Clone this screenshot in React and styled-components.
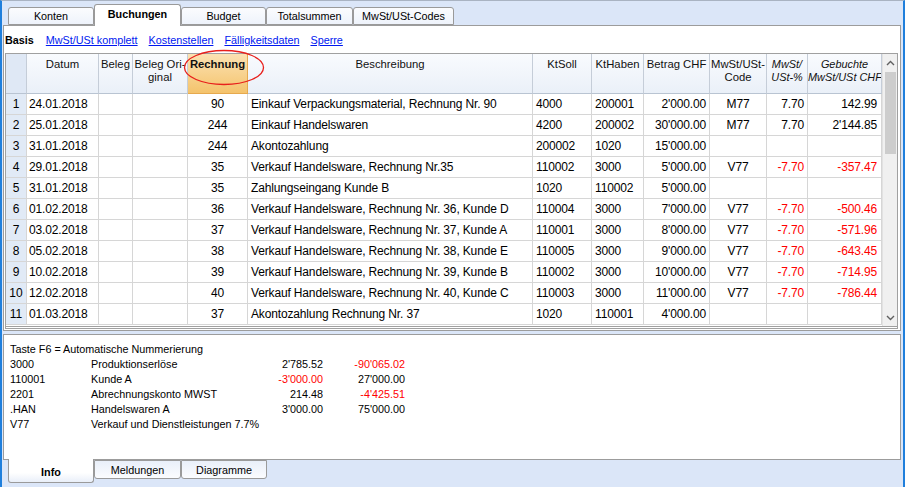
import React from 'react';
import styled, { createGlobalStyle } from 'styled-components';

const GlobalStyle = createGlobalStyle`
  html, body {
    margin: 0;
    padding: 0;
  }
  body {
    font-family: "Liberation Sans", Arial, sans-serif;
    background: #dbe6f8;
  }
`;

const topTabs = [
  { label: 'Konten', width: 86 },
  { label: 'Buchungen', width: 87, active: true },
  { label: 'Budget', width: 85 },
  { label: 'Totalsummen', width: 87 },
  { label: 'MwSt/USt-Codes', width: 101 },
];

const bottomTabs = [
  { label: 'Info', width: 86, active: true },
  { label: 'Meldungen', width: 87 },
  { label: 'Diagramme', width: 86 },
];

const views = ['MwSt/USt komplett', 'Kostenstellen', 'Fälligkeitsdaten', 'Sperre'];

// width includes the 1px grid line on the right
const columns = [
  { key: 'nr', width: 21, align: 'center', lines: [''] },
  { key: 'date', width: 72, align: 'left', pad: 2, lines: ['Datum'] },
  { key: 'doc', width: 34, align: 'left', lines: ['Beleg'] },
  { key: 'orig', width: 55, align: 'left', lines: ['Beleg Ori-', 'ginal'] },
  { key: 'inv', width: 60, align: 'center', lines: ['Rechnung'], highlight: true },
  { key: 'desc', width: 285, align: 'left', pad: 3, lines: ['Beschreibung'] },
  { key: 'debit', width: 59, align: 'left', pad: 3, lines: ['KtSoll'] },
  { key: 'credit', width: 52, align: 'left', pad: 3, lines: ['KtHaben'] },
  { key: 'amount', width: 66, align: 'right', pad: 3, lines: ['Betrag CHF'] },
  { key: 'code', width: 57, align: 'center', lines: ['MwSt/USt-', 'Code'] },
  { key: 'pct', width: 41, align: 'right', pad: 3, lines: ['MwSt/', 'USt-%'], italic: true },
  { key: 'vat', width: 74, align: 'right', pad: 4, lines: ['Gebuchte', 'MwSt/USt CHF'], italic: true },
];

const rows = [
  ['24.01.2018', '90', 'Einkauf Verpackungsmaterial, Rechnung Nr. 90', '4000', '200001', "2'000.00", 'M77', '7.70', '142.99'],
  ['25.01.2018', '244', 'Einkauf Handelswaren', '4200', '200002', "30'000.00", 'M77', '7.70', "2'144.85"],
  ['31.01.2018', '244', 'Akontozahlung', '200002', '1020', "15'000.00", '', '', ''],
  ['29.01.2018', '35', 'Verkauf Handelsware, Rechnung Nr.35', '110002', '3000', "5'000.00", 'V77', '-7.70', '-357.47'],
  ['31.01.2018', '35', 'Zahlungseingang Kunde B', '1020', '110002', "5'000.00", '', '', ''],
  ['01.02.2018', '36', 'Verkauf Handelsware, Rechnung Nr. 36, Kunde D', '110004', '3000', "7'000.00", 'V77', '-7.70', '-500.46'],
  ['03.02.2018', '37', 'Verkauf Handelsware, Rechnung Nr. 37, Kunde A', '110001', '3000', "8'000.00", 'V77', '-7.70', '-571.96'],
  ['05.02.2018', '38', 'Verkauf Handelsware, Rechnung Nr. 38, Kunde E', '110005', '3000', "9'000.00", 'V77', '-7.70', '-643.45'],
  ['10.02.2018', '39', 'Verkauf Handelsware, Rechnung Nr. 39, Kunde B', '110002', '3000', "10'000.00", 'V77', '-7.70', '-714.95'],
  ['12.02.2018', '40', 'Verkauf Handelsware, Rechnung Nr. 40, Kunde C', '110003', '3000', "11'000.00", 'V77', '-7.70', '-786.44'],
  ['01.03.2018', '37', 'Akontozahlung Rechnung Nr. 37', '1020', '110001', "4'000.00", '', '', ''],
];

const infoLines = [
  ['3000', 'Produktionserlöse', "2'785.52", "-90'065.02"],
  ['110001', 'Kunde A', "-3'000.00", "27'000.00"],
  ['2201', 'Abrechnungskonto MWST', '214.48', "-4'425.51"],
  ['.HAN', 'Handelswaren A', "3'000.00", "75'000.00"],
  ['V77', 'Verkauf und Dienstleistungen 7.7%'],
];

const gridTemplate = columns.map((c) => `${c.width}px`).join(' ');

export default function App() {
  return (
    <>
      <GlobalStyle />
      <Window>
        <TopTabBar>
          {topTabs.map((t) => (
            <TopTab key={t.label} $active={t.active} style={{ width: t.width }}>
              {t.label}
            </TopTab>
          ))}
        </TopTabBar>

        <MainPanel>
          <ViewBar>
            <ViewCurrent>Basis</ViewCurrent>
            {views.map((v) => (
              <ViewLink key={v}>{v}</ViewLink>
            ))}
          </ViewBar>

          <Table>
            <GridArea>
              <HeaderRow>
                {columns.map((c) => (
                  <HeaderCell
                    key={c.key}
                    $first={c.key === 'nr'}
                    $highlight={c.highlight}
                    $italic={c.italic}
                  >
                    {c.lines.map((l, i) => (
                      <HeaderLine key={i}>{l}</HeaderLine>
                    ))}
                  </HeaderCell>
                ))}
              </HeaderRow>
              {rows.map((r, i) => {
                const cells = [String(i + 1), r[0], '', '', ...r.slice(1)];
                return (
                  <BodyRow key={i}>
                    {columns.map((c, j) => (
                      <BodyCell
                        key={c.key}
                        $first={j === 0}
                        $align={c.align}
                        $pad={c.pad}
                        $negative={cells[j].startsWith('-')}
                      >
                        {cells[j]}
                      </BodyCell>
                    ))}
                  </BodyRow>
                );
              })}
            </GridArea>

            <Scrollbar>
              <ScrollArrow>
                <svg width="9" height="6" viewBox="0 0 9 6">
                  <polyline points="1,5 4.5,1.5 8,5" fill="none" stroke="#606060" strokeWidth="1.4" />
                </svg>
              </ScrollArrow>
              <ScrollTrack>
                <ScrollThumb />
              </ScrollTrack>
              <ScrollArrow>
                <svg width="9" height="6" viewBox="0 0 9 6">
                  <polyline points="1,1 4.5,4.5 8,1" fill="none" stroke="#606060" strokeWidth="1.4" />
                </svg>
              </ScrollArrow>
            </Scrollbar>

            <Marker width="82" height="37" viewBox="0 0 82 37">
              <ellipse cx="41" cy="18.5" rx="39.5" ry="17" fill="none" stroke="#e8201c" strokeWidth="1.3" />
            </Marker>
          </Table>
        </MainPanel>

        <InfoPanel>
          <InfoTitle>Taste F6 = Automatische Nummerierung</InfoTitle>
          {infoLines.map((l) => (
            <InfoRow key={l[0]}>
              <span>{l[0]}</span>
              <InfoText $wide={l.length === 2}>{l[1]}</InfoText>
              {l[2] && <InfoAmount $negative={l[2].startsWith('-')}>{l[2]}</InfoAmount>}
              {l[3] && <InfoAmount $negative={l[3].startsWith('-')}>{l[3]}</InfoAmount>}
            </InfoRow>
          ))}
        </InfoPanel>

        <BottomTabBar>
          {bottomTabs.map((t) => (
            <BottomTab key={t.label} $active={t.active} style={{ width: t.width }}>
              {t.label}
            </BottomTab>
          ))}
        </BottomTabBar>
      </Window>
    </>
  );
}

const Window = styled.div`
  width: 905px;
  height: 487px;
  box-sizing: border-box;
  border-top: 1px solid #a9b3c2;
  border-left: 2px solid #1f7fdc;
  border-right: 2px solid #1f7fdc;
  padding: 0 1px 0 1px;
  background: #dbe6f8;
  display: flex;
  flex-direction: column;
  overflow: hidden;
`;

const TopTabBar = styled.div`
  height: 24px;
  display: flex;
  align-items: flex-end;
  padding-left: 5px;
`;

const TopTab = styled.div`
  box-sizing: border-box;
  height: ${(p) => (p.$active ? '22px' : '18px')};
  margin-bottom: ${(p) => (p.$active ? '-1px' : '0')};
  position: relative;
  z-index: ${(p) => (p.$active ? 2 : 1)};
  border: 1px solid #9a9a9a;
  border-bottom: ${(p) => (p.$active ? 'none' : '1px solid #9a9a9a')};
  border-radius: 3px 3px 0 0;
  background: ${(p) =>
    p.$active ? '#ffffff' : 'linear-gradient(#fbfcfe, #eef3fb)'};
  font-size: 10.8px;
  font-weight: ${(p) => (p.$active ? 'bold' : 'normal')};
  color: #000;
  display: flex;
  align-items: center;
  justify-content: center;
  padding-bottom: ${(p) => (p.$active ? '3px' : '0')};
`;

const MainPanel = styled.div`
  height: 306px;
  box-sizing: border-box;
  margin-right: 1px;
  background: #fff;
  border: 1px solid #9c9c9c;
  padding: 0 2px 0 1px;
  display: flex;
  flex-direction: column;
`;

const ViewBar = styled.div`
  height: 27px;
  display: flex;
  align-items: center;
  gap: 11px;
  font-size: 10.8px;
  padding-top: 1px;
  box-sizing: border-box;
`;

const ViewCurrent = styled.span`
  font-weight: bold;
  color: #000;
  margin-right: 1px;
`;

const ViewLink = styled.span`
  color: #0018f0;
  text-decoration: underline;
`;

const Table = styled.div`
  position: relative;
  display: flex;
  border: 1px solid #a0a0a0;
  border-bottom: 3px double #a0a0a0;
  height: 276px;
  box-sizing: border-box;
`;

const GridArea = styled.div`
  display: flex;
  flex-direction: column;
`;

const HeaderRow = styled.div`
  display: grid;
  grid-template-columns: ${gridTemplate};
  height: 40px;
`;

const HeaderCell = styled.div`
  box-sizing: border-box;
  overflow: hidden;
  border-right: 1px solid ${(p) => (p.$highlight ? '#e6a94e' : '#c5cdd8')};
  border-bottom: 1px solid ${(p) => (p.$highlight ? '#e6a94e' : '#b9c4d2')};
  background: ${(p) =>
    p.$highlight
      ? 'linear-gradient(#fbe2b3, #f4c36c)'
      : p.$first
      ? '#dfe8f5'
      : 'linear-gradient(#f9fbfe, #eaf0f8)'};
  font-size: ${(p) => (p.$italic ? '10.9px' : '11.3px')};
  font-weight: ${(p) => (p.$highlight ? 'bold' : 'normal')};
  font-style: ${(p) => (p.$italic ? 'italic' : 'normal')};
  color: #111;
  text-align: center;
  padding-top: 4px;
  line-height: 13px;
`;

const HeaderLine = styled.div`
  white-space: nowrap;
`;

const BodyRow = styled.div`
  display: grid;
  grid-template-columns: ${gridTemplate};
  height: 21px;
`;

const BodyCell = styled.div`
  box-sizing: border-box;
  overflow: hidden;
  white-space: nowrap;
  border-right: 1px solid #d6d6d6;
  border-bottom: 1px solid #d6d6d6;
  background: ${(p) => (p.$first ? '#e1eaf6' : '#fff')};
  font-size: 12px;
  letter-spacing: ${(p) => (p.$first ? '0' : '-0.15px')};
  color: ${(p) => (p.$negative ? '#ff0000' : '#000')};
  text-align: ${(p) => p.$align};
  padding: 0 ${(p) => p.$pad || 0}px;
  line-height: 20px;
`;

const Scrollbar = styled.div`
  width: 17px;
  display: flex;
  flex-direction: column;
  background: #f0f0f0;
  border-left: 1px solid #e2e2e2;
`;

const ScrollArrow = styled.div`
  height: 17px;
  display: flex;
  align-items: center;
  justify-content: center;
  flex-shrink: 0;
`;

const ScrollTrack = styled.div`
  flex: 1;
  padding: 1px 1px 0 2px;
`;

const ScrollThumb = styled.div`
  height: 82px;
  background: #cdcdcd;
`;

const Marker = styled.svg`
  position: absolute;
  left: 177px;
  top: -5px;
  pointer-events: none;
`;

const InfoPanel = styled.div`
  margin-top: 3px;
  margin-right: 1px;
  height: 126px;
  box-sizing: border-box;
  background: #fff;
  border: 1px solid #9c9c9c;
  padding: 7px 0 0 6px;
  font-size: 10.8px;
  line-height: 15px;
  color: #000;
`;

const InfoTitle = styled.div`
  white-space: nowrap;
`;

const InfoRow = styled.div`
  display: grid;
  grid-template-columns: 81px 170px 62px 82px;
  white-space: nowrap;
`;

const InfoText = styled.span`
  grid-column: ${(p) => (p.$wide ? 'span 3' : 'auto')};
`;

const InfoAmount = styled.span`
  text-align: right;
  color: ${(p) => (p.$negative ? '#ff0000' : '#000')};
`;

const BottomTabBar = styled.div`
  display: flex;
  align-items: flex-start;
  padding-left: 5px;
  margin-top: -1px;
`;

const BottomTab = styled.div`
  box-sizing: border-box;
  height: ${(p) => (p.$active ? '24px' : '19px')};
  margin-top: ${(p) => (p.$active ? '0' : '1px')};
  position: relative;
  z-index: ${(p) => (p.$active ? 2 : 1)};
  border: 1px solid #9a9a9a;
  border-top: ${(p) => (p.$active ? 'none' : '1px solid #9a9a9a')};
  border-radius: 0 0 3px 3px;
  background: ${(p) =>
    p.$active ? 'linear-gradient(#ffffff 60%, #e9eff9)' : 'linear-gradient(#e9eff9, #fbfcfe)'};
  font-size: 10.8px;
  font-weight: ${(p) => (p.$active ? 'bold' : 'normal')};
  color: #000;
  display: flex;
  align-items: center;
  justify-content: center;
  padding-top: ${(p) => (p.$active ? '3px' : '0')};
`;
